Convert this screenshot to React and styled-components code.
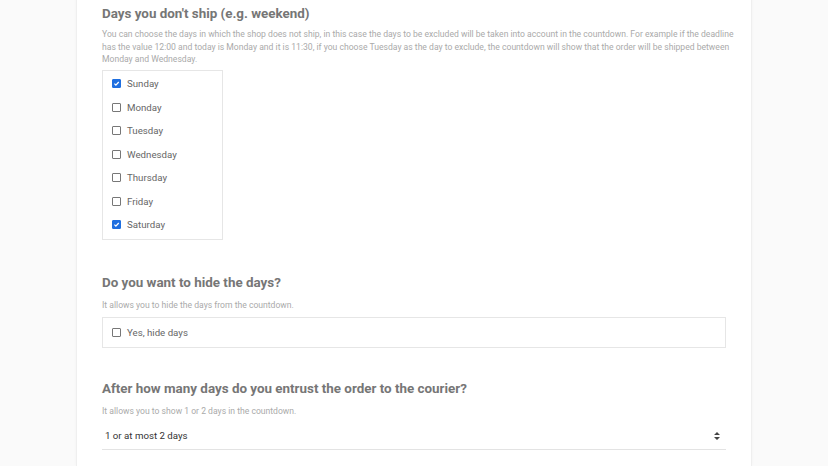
import React, { useState } from "react";
import styled, { createGlobalStyle } from "styled-components";

const GlobalStyle = createGlobalStyle`
  html, body {
    margin: 0;
    padding: 0;
    background: #fafafa;
    font-family: Roboto, "Liberation Sans", Arial, sans-serif;
  }
`;

const Page = styled.div`
  width: 828px;
  height: 466px;
  overflow: hidden;
  display: flex;
`;

const Card = styled.div`
  margin-left: 76px;
  width: 676px;
  margin-top: -8px;
  background: #fff;
  border-left: 1px solid #efefef;
  border-right: 1px solid #efefef;
  box-shadow: 0 0 3px rgba(0, 0, 0, 0.03);
  padding: 0 25px;
  box-sizing: border-box;
`;

const Section = styled.section`
  display: flex;
  flex-direction: column;
  padding-top: ${(p) => p.$top || 0}px;
`;

const Heading = styled.h2`
  margin: 0;
  font-size: 13.4px;
  line-height: 20px;
  font-weight: 700;
  color: #767676;
`;

const Help = styled.p`
  margin: ${(p) => p.$gap || 4}px -8px 5px 0;
  font-size: 8.6px;
  line-height: 12.6px;
  color: #aaa;
`;

const DayList = styled.div`
  display: flex;
  flex-direction: column;
  align-self: flex-start;
  width: 121px;
  box-sizing: border-box;
  border: 1px solid #e6e6e6;
  margin-top: -1px;
  padding: 1px 0 3px 9px;
`;

const Option = styled.label`
  display: flex;
  align-items: center;
  gap: 6px;
  height: 23.5px;
  font-size: 9.7px;
  color: #666;
  cursor: pointer;
`;

const Box = styled.span`
  width: 9px;
  height: 9px;
  box-sizing: border-box;
  border-radius: 1px;
  border: 1px solid ${(p) => (p.$on ? "#1f6fe0" : "#777")};
  background: ${(p) => (p.$on ? "#1f6fe0" : "#fff")};
  display: flex;
  align-items: center;
  justify-content: center;
  flex-shrink: 0;
`;

const WideBox = styled.div`
  display: flex;
  align-items: center;
  height: 31px;
  box-sizing: border-box;
  border: 1px solid #e6e6e6;
  padding-left: 9px;
`;

const Select = styled.div`
  display: flex;
  align-items: center;
  justify-content: space-between;
  height: 27px;
  padding: 0 6px 0 3px;
  border-bottom: 1px solid #e3e3e3;
  font-size: 9.7px;
  color: #333;
`;

const days = ["Sunday", "Monday", "Tuesday", "Wednesday", "Thursday", "Friday", "Saturday"];

function Check({ on }) {
  return (
    <Box $on={on}>
      {on && (
        <svg width="7" height="7" viewBox="0 0 10 10">
          <path d="M2 5.2l2.1 2.1L8.2 2.8" fill="none" stroke="#fff" strokeWidth="1.8" />
        </svg>
      )}
    </Box>
  );
}

export default function App() {
  const [off, setOff] = useState(["Sunday", "Saturday"]);
  const [hide, setHide] = useState(false);
  const toggle = (d) =>
    setOff((list) => (list.includes(d) ? list.filter((x) => x !== d) : [...list, d]));

  return (
    <Page>
      <GlobalStyle />
      <Card>
        <Section $top={12}>
          <Heading>Days you don't ship (e.g. weekend)</Heading>
          <Help>
            You can choose the days in which the shop does not ship, in this case the days to be
            excluded will be taken into account in the countdown. For example if the deadline has
            the value 12:00 and today is Monday and it is 11:30, if you choose Tuesday as the day to
            exclude, the countdown will show that the order will be shipped between Monday and
            Wednesday.
          </Help>
          <DayList>
            {days.map((d) => (
              <Option key={d} onClick={() => toggle(d)}>
                <Check on={off.includes(d)} />
                {d}
              </Option>
            ))}
          </DayList>
        </Section>
        <Section $top={33}>
          <Heading>Do you want to hide the days?</Heading>
          <Help $gap={6}>It allows you to hide the days from the countdown.</Help>
          <WideBox>
            <Option onClick={() => setHide((h) => !h)}>
              <Check on={hide} />
              Yes, hide days
            </Option>
          </WideBox>
        </Section>
        <Section $top={31}>
          <Heading>After how many days do you entrust the order to the courier?</Heading>
          <Help $gap={6}>It allows you to show 1 or 2 days in the countdown.</Help>
          <Select>
            <span>1 or at most 2 days</span>
            <svg width="6" height="8" viewBox="0 0 6 8">
              <path d="M3 0L6 3H0z M3 8L0 5h6z" fill="#444" />
            </svg>
          </Select>
        </Section>
      </Card>
    </Page>
  );
}
